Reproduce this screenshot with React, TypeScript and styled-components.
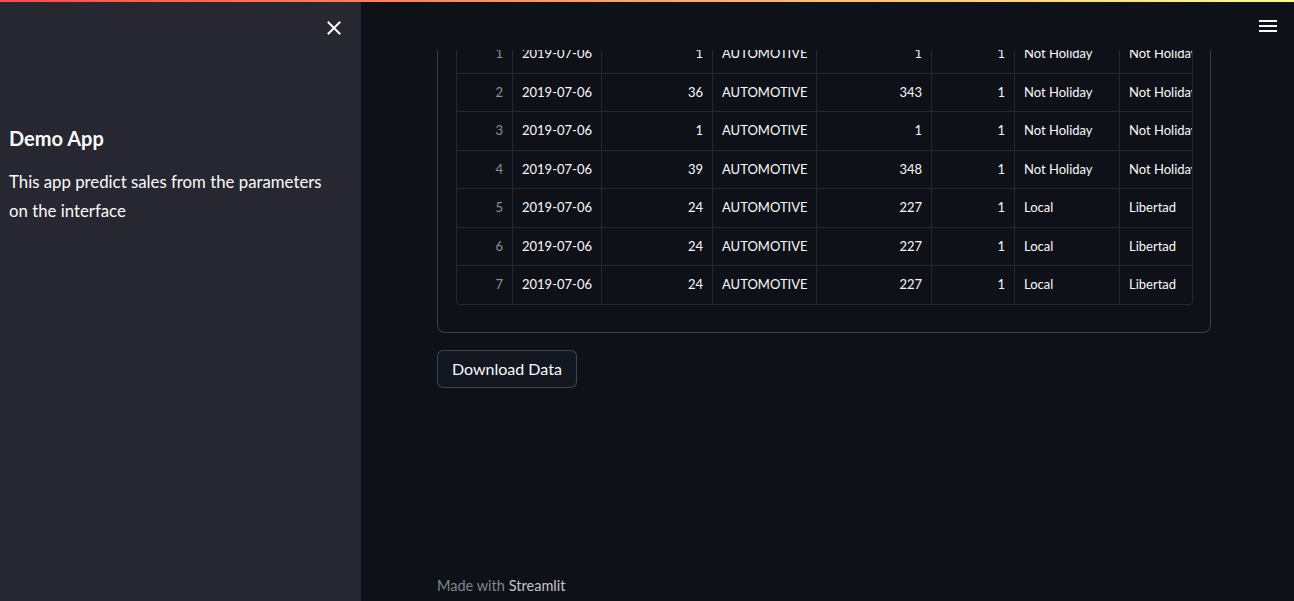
import React from "react";
import styled, { createGlobalStyle } from "styled-components";

const GlobalStyle = createGlobalStyle`
  html, body {
    margin: 0;
    height: 100%;
    background: #0e1117;
  }
  body {
    font-family: "Lato", "Noto Sans", sans-serif;
    color: #fafafa;
    overflow: hidden;
  }
`;

const Page = styled.div`
  position: relative;
  display: flex;
  height: 100vh;
`;

const Decoration = styled.div`
  position: absolute;
  top: 0;
  left: 0;
  right: 0;
  height: 2px;
  z-index: 5;
  background-image: linear-gradient(90deg, rgb(255, 75, 75), rgb(255, 253, 128));
`;

const Sidebar = styled.aside`
  width: 361px;
  flex: none;
  background: #262730;
  display: flex;
  flex-direction: column;
`;

const SidebarHeader = styled.div`
  height: 56px;
  display: flex;
  align-items: center;
  justify-content: flex-end;
  padding-right: 20px;
`;

const IconButton = styled.button`
  background: none;
  border: none;
  padding: 0;
  display: flex;
  color: #fafafa;
  cursor: pointer;
`;

const SidebarBody = styled.div`
  padding: 69px 9px 0 9px;
`;

const SidebarTitle = styled.h2`
  margin: 0 0 16px 0;
  font-size: 20px;
  line-height: 26px;
  font-weight: 700;
`;

const SidebarText = styled.p`
  margin: 0;
  font-size: 16.8px;
  line-height: 29px;
  max-width: 330px;
`;

const Main = styled.main`
  flex: 1;
  display: flex;
  flex-direction: column;
  min-width: 0;
`;

const TopBar = styled.header`
  height: 50px;
  flex: none;
  display: flex;
  justify-content: flex-end;
  align-items: flex-start;
  padding: 20px 17px 0 0;
  box-sizing: border-box;
`;

const Viewport = styled.div`
  flex: 1;
  overflow: hidden;
  padding-left: 76px;
`;

const Frame = styled.div`
  width: 774px;
  box-sizing: border-box;
  border: 1px solid rgba(250, 250, 250, 0.2);
  border-top: none;
  border-radius: 0 0 8px 8px;
  padding: 0 17px 27px 18px;
`;

const Table = styled.div`
  border-left: 1px solid rgba(250, 250, 250, 0.1);
  border-right: 1px solid rgba(250, 250, 250, 0.1);
  border-radius: 0 0 4px 4px;
  overflow: hidden;
`;

const Row = styled.div<{ $clipped?: boolean }>`
  display: flex;
  align-items: flex-end;
  height: ${(p) => (p.$clipped ? "23.5px" : "38.5px")};
  overflow: hidden;
  box-sizing: border-box;
  border-bottom: 1px solid rgba(250, 250, 250, 0.1);
`;

const Cell = styled.div<{ $align: "left" | "right"; $muted?: boolean; $width: number }>`
  flex: none;
  width: ${(p) => p.$width}px;
  height: 37.5px;
  line-height: 37.5px;
  box-sizing: border-box;
  padding: 0 9px;
  font-size: 13px;
  text-align: ${(p) => p.$align};
  color: ${(p) => (p.$muted ? "#8d909a" : "#fafafa")};
  white-space: nowrap;
  overflow: hidden;
  border-right: 1px solid rgba(250, 250, 250, 0.1);
  &:last-child {
    border-right: none;
    padding-right: 0;
  }
`;

const Button = styled.button`
  margin-top: 17px;
  height: 38px;
  padding: 0 14px;
  font-family: inherit;
  font-size: 16px;
  color: #fafafa;
  background: #131720;
  border: 1px solid rgba(250, 250, 250, 0.2);
  border-radius: 6px;
  cursor: pointer;
`;

const Footer = styled.footer`
  height: 32px;
  flex: none;
  display: flex;
  align-items: center;
  padding-left: 76px;
  font-size: 14.5px;
  color: #82858e;
`;

const FooterLink = styled.span`
  color: #c2c5cc;
  margin-left: 4px;
`;

type Value = string | number;

const columns: { width: number; align: "left" | "right" }[] = [
  { width: 56, align: "right" },
  { width: 89, align: "left" },
  { width: 111, align: "right" },
  { width: 104, align: "left" },
  { width: 115, align: "right" },
  { width: 83, align: "right" },
  { width: 105, align: "left" },
  { width: 72, align: "left" },
];

const rows: Value[][] = [
  [1, "2019-07-06", 1, "AUTOMOTIVE", 1, 1, "Not Holiday", "Not Holiday"],
  [2, "2019-07-06", 36, "AUTOMOTIVE", 343, 1, "Not Holiday", "Not Holiday"],
  [3, "2019-07-06", 1, "AUTOMOTIVE", 1, 1, "Not Holiday", "Not Holiday"],
  [4, "2019-07-06", 39, "AUTOMOTIVE", 348, 1, "Not Holiday", "Not Holiday"],
  [5, "2019-07-06", 24, "AUTOMOTIVE", 227, 1, "Local", "Libertad"],
  [6, "2019-07-06", 24, "AUTOMOTIVE", 227, 1, "Local", "Libertad"],
  [7, "2019-07-06", 24, "AUTOMOTIVE", 227, 1, "Local", "Libertad"],
];

const CloseIcon = () => (
  <svg width="14" height="14" viewBox="0 0 14 14">
    <path d="M1.5 1.5 L12.5 12.5 M12.5 1.5 L1.5 12.5" stroke="#fafafa" strokeWidth="2" strokeLinecap="square" />
  </svg>
);

const MenuIcon = () => (
  <svg width="18" height="12" viewBox="0 0 18 12">
    <rect x="0" y="0" width="18" height="2" fill="#fafafa" />
    <rect x="0" y="5" width="18" height="2" fill="#fafafa" />
    <rect x="0" y="10" width="18" height="2" fill="#fafafa" />
  </svg>
);

export default function App() {
  return (
    <>
      <GlobalStyle />
      <Page>
        <Decoration />
        <Sidebar>
          <SidebarHeader>
            <IconButton aria-label="Close sidebar">
              <CloseIcon />
            </IconButton>
          </SidebarHeader>
          <SidebarBody>
            <SidebarTitle>Demo App</SidebarTitle>
            <SidebarText>This app predict sales from the parameters on the interface</SidebarText>
          </SidebarBody>
        </Sidebar>
        <Main>
          <TopBar>
            <IconButton aria-label="Main menu">
              <MenuIcon />
            </IconButton>
          </TopBar>
          <Viewport>
            <Frame>
              <Table>
                {rows.map((row, i) => (
                  <Row key={i} $clipped={i === 0}>
                    {row.map((v, j) => (
                      <Cell key={j} $align={columns[j].align} $width={columns[j].width} $muted={j === 0}>
                        {v}
                      </Cell>
                    ))}
                  </Row>
                ))}
              </Table>
            </Frame>
            <Button>Download Data</Button>
          </Viewport>
          <Footer>
            Made with<FooterLink>Streamlit</FooterLink>
          </Footer>
        </Main>
      </Page>
    </>
  );
}
